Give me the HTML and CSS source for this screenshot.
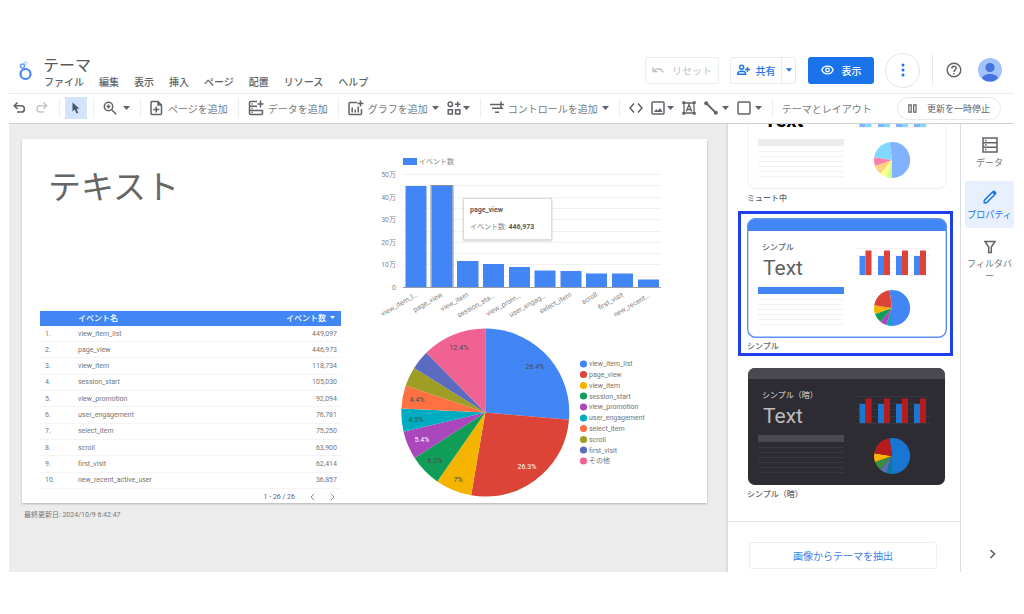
FILE: index.html
```html
<!DOCTYPE html>
<html lang="ja">
<head>
<meta charset="utf-8">
<title>テーマ</title>
<link rel="stylesheet" href="styles.css">
</head>
<body>
<svg class="defs" aria-hidden="true">
  <symbol id="caret" viewBox="0 0 7 4"><path d="M0 0h7L3.5 4z" fill="currentColor"/></symbol>
  <symbol id="preview" viewBox="0 0 200 121">
    <g class="t-grid">
      <path d="M109 30.500h74M109 37.500h74M109 43.500h74M109 50.500h74M109 57.500h74"/>
      <path d="M11 81.500h86M11 86.500h86M11 91.500h86M11 96.500h86M11 101.500h86M11 106.500h86"/>
    </g>
    <rect class="t-head" x="11" y="69" width="86" height="7"/>
    <path class="t-c1" d="M112.500 38h6v19h-6zM131 38h6v19h-6zM149 38h6v19h-6zM167 38h6v19h-6z"/>
    <path class="t-c2" d="M118.500 32.500h6V57h-6zM137 32.500h6V57h-6zM155 32.500h6V57h-6zM173 32.500h6V57h-6z"/>
    <path class="t-c1" d="M145 90L142.500 72.200A18 18 0 1 1 145 108z"/>
    <path class="t-c6" d="M145 90V108A18 18 0 0 1 139.400 107.100z"/>
    <path class="t-c5" d="M145 90L139.400 107.100A18 18 0 0 1 133.400 103.800z"/>
    <path class="t-c4" d="M145 90L133.400 103.800A18 18 0 0 1 128 96z"/>
    <path class="t-c3" d="M145 90L128 96A18 18 0 0 1 127.200 87.200z"/>
    <path class="t-c2" d="M145 90L127.200 87.200A18 18 0 0 1 142.500 72.200z"/>
  </symbol>
</svg>
<div class="app">
  <header class="header">
    <svg class="logo" viewBox="0 0 14 22" fill="none" stroke="#4285f4"><circle cx="7.500" cy="15" r="5" stroke-width="2.200"/><circle cx="4.500" cy="7" r="2" stroke-width="1.500" stroke="#669df6"/><circle cx="7.800" cy="4" r="1.500" stroke-width="1" stroke="#aecbfa"/></svg>
    <div class="titles">
      <h1>テーマ</h1>
      <nav class="menu"><button>ファイル</button><button>編集</button><button>表示</button><button>挿入</button><button>ページ</button><button>配置</button><button>リソース</button><button>ヘルプ</button></nav>
    </div>
    <div class="actions">
      <button class="btn reset" disabled><svg width="12" height="8" viewBox="0 0 12 8" fill="none" stroke="currentColor" stroke-width="1.300"><path d="M1 1v4.500h4.500M1.500 5C4 2 9 1.500 11.200 6.500"/></svg>リセット</button>
      <div class="split">
        <button class="share"><svg width="13" height="12" viewBox="0 0 13 12" fill="none" stroke="currentColor" stroke-width="1.400"><circle cx="4.700" cy="3.200" r="2"/><path d="M.8 10.300V9.500C.8 8 3 7.300 4.700 7.300S8.600 8 8.600 9.500v.8zM10.500 3v5M8 5.500h5"/></svg>共有</button>
        <button class="more" aria-label="共有メニュー"><svg class="caret"><use href="#caret"/></svg></button>
      </div>
      <button class="btn view"><svg width="13" height="10" viewBox="0 0 13 10" fill="none" stroke="currentColor" stroke-width="1.300"><path d="M.8 5C3-.1 10-.1 12.200 5 10 10.100 3 10.100.8 5z"/><circle cx="6.500" cy="5" r="1.800"/></svg>表示</button>
      <button class="round" aria-label="その他"><svg width="4" height="14" viewBox="0 0 4 14" fill="#1a73e8"><circle cx="2" cy="2" r="1.500"/><circle cx="2" cy="7" r="1.500"/><circle cx="2" cy="12" r="1.500"/></svg></button>
      <span class="rule"></span>
      <button class="plain help" aria-label="ヘルプ"><svg width="16" height="16" viewBox="0 0 16 16" fill="none" stroke="#5f6368" stroke-width="1.400"><circle cx="8" cy="8" r="6.800"/><path d="M5.800 6.500C5.800 3.500 10.300 3.600 10.300 6.300 10.300 7.900 8 7.900 8 9.900M8 10.900v1.500"/></svg></button>
      <button class="plain" aria-label="アカウント"><svg width="24" height="24" viewBox="0 0 24 24"><circle cx="12" cy="12" r="12" fill="#a1c2fa"/><circle cx="12" cy="9.500" r="4.600" fill="#4374e0"/><path d="M4 20.500C5 14.500 19 14.500 20 20.500A12 12 0 0 1 4 20.500z" fill="#4374e0"/></svg></button>
    </div>
  </header>

  <div class="toolbar">
    <div class="group first">
      <button aria-label="元に戻す"><svg width="14" height="14" viewBox="0 0 14 14" fill="none" stroke="#5f6368" stroke-width="1.600"><path d="M4.500 1.500L1.300 4.800 4.500 8M1.500 4.800H8.500C12.300 4.800 12.300 11 8.500 11H4"/></svg></button>
      <button aria-label="やり直し"><svg width="14" height="14" viewBox="0 0 14 14" fill="none" stroke="#c4c7ca" stroke-width="1.500"><path d="M8.500 1.500L11.700 4.800 8.500 8M11.500 4.800H5C1 4.800 1 11 5 11H9"/></svg></button>
    </div>
    <div class="group"><button class="cursor" aria-label="選択"><svg width="10" height="12" viewBox="0 0 10 12"><path d="M1.500.5v9l2.300-2 1.800 4 1.700-.8-1.800-3.900h3z" fill="#4a5568"/></svg></button></div>
    <div class="group"><button class="zoomer" aria-label="ズーム"><svg width="14" height="14" viewBox="0 0 14 14" fill="none" stroke="#5f6368" stroke-width="1.500"><circle cx="5.500" cy="5.500" r="4.200"/><path d="M8.700 8.700l4.500 4.500M3.500 5.500h4M5.500 3.500v4"/></svg><svg class="caret"><use href="#caret"/></svg></button></div>
    <div class="group"><button><svg width="14" height="16" viewBox="0 0 14 16" fill="none" stroke="#5f6368" stroke-width="1.500"><path d="M8 1.500H2Q1 1.500 1 2.500v11q0 1 1 1h8.500q1 0 1-1V5zM8 1.500V5h3.500M6.200 6.500v6M3.300 9.500h6"/></svg>ページを追加</button></div>
    <div class="group"><button><svg width="16" height="16" viewBox="0 0 16 16" fill="none" stroke="#5f6368" stroke-width="1.500"><path d="M9 1.500H2.500Q1.500 1.500 1.500 2.500v3q0 .8 1 .8H9M1.500 6.500v7q0 1 1 1h11q1 0 1-1v-3H1.500M12.500.5v7M9.500 4h6"/><path d="M3.500 4h1.200M3.500 8.500h1.200M3.500 12.500h1.200"/></svg>データを追加</button></div>
    <div class="group">
      <button><svg width="16" height="16" viewBox="0 0 16 16" fill="none" stroke="#5f6368" stroke-width="1.500"><path d="M9 2.500H2Q1 2.500 1 3.500v10q0 1 1 1h10.500q1 0 1-1V9M12.500.5v6M9.500 3.500h6M4.200 7.500v5M7.200 9.500v3M10.200 6.500v6"/></svg>グラフを追加<svg class="caret"><use href="#caret"/></svg></button>
      <button class="tight" aria-label="コミュニティ ビジュアライゼーション"><svg width="14" height="14" viewBox="0 0 14 14" fill="none" stroke="#5f6368" stroke-width="1.500"><circle cx="3.300" cy="3.300" r="2.200"/><path d="M1.200 8.700h4.200v4.200H1.200zM8.600 8.700h4.200v4.200H8.600zM10.700.5v5.600M7.900 3.300h5.600"/></svg><svg class="caret"><use href="#caret"/></svg></button>
    </div>
    <div class="group"><button><svg width="14" height="14" viewBox="0 0 14 14" fill="none" stroke="#5f6368" stroke-width="1.500"><path d="M0 3.500h8M2 7.200h11M5 11.200h4M11 .5v6M8 3.500h6"/></svg>コントロールを追加<svg class="caret"><use href="#caret"/></svg></button></div>
    <div class="group">
      <button aria-label="URLの埋め込み"><svg width="14" height="12" viewBox="0 0 14 12" fill="none" stroke="#5f6368" stroke-width="1.600"><path d="M5 1.500L1 6l4 4.500M9 1.500L13 6l-4 4.500"/></svg></button>
      <button class="tight" aria-label="画像"><svg width="14" height="14" viewBox="0 0 14 14" fill="none" stroke="#5f6368" stroke-width="1.500"><rect x="1" y="1" width="12" height="12" rx="1"/><path d="M3 11l2.200-3 1.600 1.800L9 7l2.500 4z" fill="#5f6368" stroke="none"/></svg><svg class="caret"><use href="#caret"/></svg></button>
      <button aria-label="テキスト"><svg width="14" height="14" viewBox="0 0 14 14" fill="none" stroke="#5f6368" stroke-width="1.300"><path d="M2 2h10v10H2zM4.300 10.500L7 3.500l2.700 7M5.200 8.500h3.600"/><path d="M.3.300h2.800v2.800H.3zM10.900.3h2.800v2.800h-2.800zM.3 10.900h2.800v2.800H.3zM10.900 10.900h2.800v2.800h-2.800z" fill="#5f6368" stroke="none"/></svg></button>
      <button aria-label="線"><svg width="14" height="14" viewBox="0 0 14 14"><path d="M2 2l10 10" stroke="#5f6368" stroke-width="1.800"/><circle cx="2.200" cy="2.200" r="2" fill="#5f6368"/><circle cx="11.800" cy="11.800" r="2" fill="#5f6368"/></svg><svg class="caret"><use href="#caret"/></svg></button>
      <button aria-label="図形"><svg width="14" height="14" viewBox="0 0 14 14" fill="none" stroke="#5f6368" stroke-width="1.500"><rect x="1" y="1" width="12" height="12" rx="1"/></svg><svg class="caret"><use href="#caret"/></svg></button>
    </div>
    <div class="group last"><button>テーマとレイアウト</button></div>
    <button class="pill"><svg width="9" height="9" viewBox="0 0 9 9" fill="none" stroke="#5f6368" stroke-width="1.200"><path d="M.8.800h2.400v7.400H.8zM5.600.800H8v7.400H5.600z"/></svg>更新を一時停止</button>
  </div>

  <div class="body">
    <main class="canvas">
      <section class="page">
        <div class="left">
          <h2>テキスト</h2>
          <table>
            <thead><tr><th></th><th>イベント名</th><th class="num">イベント数 <svg width="5" height="3" viewBox="0 0 5 3"><path d="M0 0h5L2.500 3z" fill="#fff"/></svg></th></tr></thead>
            <tbody>
              <tr><td>1.</td><td>view_item_list</td><td class="num">449,097</td></tr>
              <tr><td>2.</td><td>page_view</td><td class="num">446,973</td></tr>
              <tr><td>3.</td><td>view_item</td><td class="num">118,734</td></tr>
              <tr><td>4.</td><td>session_start</td><td class="num">105,030</td></tr>
              <tr><td>5.</td><td>view_promotion</td><td class="num">92,094</td></tr>
              <tr><td>6.</td><td>user_engagement</td><td class="num">76,781</td></tr>
              <tr><td>7.</td><td>select_item</td><td class="num">75,250</td></tr>
              <tr><td>8.</td><td>scroll</td><td class="num">63,900</td></tr>
              <tr><td>9.</td><td>first_visit</td><td class="num">62,414</td></tr>
              <tr><td>10.</td><td>new_recent_active_user</td><td class="num">36,857</td></tr>
            </tbody>
          </table>
          <div class="pager"><span>1 - 26 / 26</span>
            <button aria-label="前へ"><svg width="5" height="8" viewBox="0 0 5 8" fill="none" stroke="#8a8d91"><path d="M4.200.8L1 4l3.200 3.200"/></svg></button>
            <button aria-label="次へ"><svg width="5" height="8" viewBox="0 0 5 8" fill="none" stroke="#8a8d91"><path d="M.8.8L4 4 .8 7.200"/></svg></button>
          </div>
        </div>
        <svg class="charts" viewBox="341 139 366 364">
          <rect x="403" y="158" width="14" height="7" fill="#4285f4"/>
          <text x="419" y="164">イベント数</text>
          <path class="grid" d="M403 174.500h258M403 197.500h258M403 219.500h258M403 242.500h258M403 264.500h258M403 185.500h258M403 208.500h258M403 231.500h258M403 253.500h258M403 276.500h258"/>
          <g class="end"><text x="396" y="177">50万</text><text x="396" y="200">40万</text><text x="396" y="222">30万</text><text x="396" y="245">20万</text><text x="396" y="267">10万</text><text x="396" y="290">0</text></g>
          <path fill="#4285f4" d="M405.500 186h21v102h-21zM431.500 186h21v102h-21zM457 261h21.500v27H457zM483 264h21v24h-21zM509 267h21v21h-21zM534.500 270.500h21V288h-21zM560.500 271h21v17h-21zM586 273.500h21V288h-21zM612 273.500h21V288h-21zM638 279.500h21V288h-21z"/>
          <rect x="431" y="185.500" width="22" height="102" fill="none" stroke="#8a8f98"/>
          <path d="M403 287.500h258" stroke="#9a9da1"/>
          <g class="end">
            <text transform="translate(418 296) rotate(-30)">view_item_l…</text>
            <text transform="translate(443 296) rotate(-30)">page_view</text>
            <text transform="translate(469 296) rotate(-30)">view_item</text>
            <text transform="translate(495 297) rotate(-30)">session_sta…</text>
            <text transform="translate(521 297) rotate(-30)">view_prom…</text>
            <text transform="translate(546 297) rotate(-30)">user_engag…</text>
            <text transform="translate(572 296) rotate(-30)">select_item</text>
            <text transform="translate(598 296) rotate(-30)">scroll</text>
            <text transform="translate(624 296) rotate(-30)">first_visit</text>
            <text transform="translate(650 297) rotate(-30)">new_recent…</text>
          </g>
          <g class="tip"><rect x="463.500" y="198.500" width="88" height="41" fill="#fff" stroke="#dadce0"/><text class="dark" x="470" y="212">page_view</text><text x="470" y="229">イベント数: <tspan class="dark">446,973</tspan></text></g>

          <g class="pie" transform="translate(485.300 412.500) rotate(-90)">
            <circle r="42" pathLength="100" stroke="#4285f4" stroke-dasharray="26.400 73.600"/>
            <circle r="42" pathLength="100" stroke="#db4437" stroke-dasharray="26.300 73.700" stroke-dashoffset="-26.400"/>
            <circle r="42" pathLength="100" stroke="#f4b400" stroke-dasharray="7 93" stroke-dashoffset="-52.700"/>
            <circle r="42" pathLength="100" stroke="#0f9d58" stroke-dasharray="6.200 93.800" stroke-dashoffset="-59.700"/>
            <circle r="42" pathLength="100" stroke="#ab47bc" stroke-dasharray="5.400 94.600" stroke-dashoffset="-65.900"/>
            <circle r="42" pathLength="100" stroke="#00acc1" stroke-dasharray="4.500 95.500" stroke-dashoffset="-71.300"/>
            <circle r="42" pathLength="100" stroke="#ff7043" stroke-dasharray="4.400 95.600" stroke-dashoffset="-75.800"/>
            <circle r="42" pathLength="100" stroke="#9e9d24" stroke-dasharray="3.700 96.300" stroke-dashoffset="-80.200"/>
            <circle r="42" pathLength="100" stroke="#5c6bc0" stroke-dasharray="3.700 96.300" stroke-dashoffset="-83.900"/>
            <circle r="42" pathLength="100" stroke="#f06292" stroke-dasharray="12.400 87.600" stroke-dashoffset="-87.600"/>
          </g>
          <g class="share-labels"><text x="535" y="369">26.4%</text><text class="light" x="527" y="469">26.3%</text><text x="458" y="482">7%</text><text x="435" y="463">6.2%</text><text class="light" x="422" y="442">5.4%</text><text x="416" y="422">4.5%</text><text x="417" y="402">4.4%</text><text x="459" y="350">12.4%</text></g>
          <g>
            <circle cx="583.500" cy="364" r="3.600" fill="#4285f4"/><circle cx="583.500" cy="374.500" r="3.600" fill="#db4437"/><circle cx="583.500" cy="385.500" r="3.600" fill="#f4b400"/><circle cx="583.500" cy="396" r="3.600" fill="#0f9d58"/><circle cx="583.500" cy="407" r="3.600" fill="#ab47bc"/><circle cx="583.500" cy="418" r="3.600" fill="#00acc1"/><circle cx="583.500" cy="428.500" r="3.600" fill="#ff7043"/><circle cx="583.500" cy="439.500" r="3.600" fill="#9e9d24"/><circle cx="583.500" cy="450" r="3.600" fill="#5c6bc0"/><circle cx="583.500" cy="461" r="3.600" fill="#f06292"/>
          </g>
          <g class="legend"><text x="589" y="366">view_item_list</text><text x="589" y="377">page_view</text><text x="589" y="388">view_item</text><text x="589" y="399">session_start</text><text x="589" y="409">view_promotion</text><text x="589" y="420">user_engagement</text><text x="589" y="431">select_item</text><text x="589" y="442">scroll</text><text x="589" y="453">first_visit</text><text x="589" y="463">その他</text></g>
        </svg>
      </section>
      <p class="updated">最終更新日: 2024/10/9 6:42:47</p>
    </main>

    <aside class="panel">
      <div class="themes">
        <button class="theme muted">
          <svg viewBox="0 0 200 121"><rect x="1" y="1.500" width="198" height="117" rx="8" fill="#fff" stroke="#eceff1"/><text class="big" x="17" y="57">Text</text><use href="#preview"/></svg>
          <span>ミュート中</span>
        </button>
        <button class="theme simple selected" aria-pressed="true">
          <svg viewBox="0 0 200 121"><path d="M0 13V9A9 9 0 0 1 9 0H191A9 9 0 0 1 200 9V13z" fill="#4285f4"/><rect x=".7" y=".7" width="198.600" height="118.600" rx="8" fill="none" stroke="#5b93f5" stroke-width="1.400"/><text class="name" x="15" y="32">シンプル</text><text class="big" x="16" y="57">Text</text><use href="#preview"/></svg>
          <span>シンプル</span>
        </button>
        <button class="theme night">
          <svg viewBox="0 0 200 121"><rect x="1" y="2" width="197" height="117" rx="7" fill="#2d2c33"/><path d="M1 13V9A7 7 0 0 1 8 2H191A7 7 0 0 1 198 9V13z" fill="#4a4950"/><text class="name" x="15" y="32">シンプル（暗）</text><text class="big" x="16" y="57">Text</text><use href="#preview"/></svg>
          <span>シンプル（暗）</span>
        </button>
      </div>
      <div class="extract"><button>画像からテーマを抽出</button></div>
    </aside>

    <nav class="rail">
      <button><svg width="16" height="16" viewBox="0 0 16 16" fill="none" stroke="#5f6368" stroke-width="1.500"><path d="M1 1h14v14H1zM1 5.700h14M1 10.300h14"/><path d="M3 3.400h1.500M3 8h1.500M3 12.600h1.500"/></svg>データ</button>
      <button class="on"><svg width="16" height="16" viewBox="0 0 16 16" fill="none" stroke="#1a73e8" stroke-width="1.400"><path d="M2.200 13.800v-2.400L10.500 3.100l2.400 2.400L4.600 13.800z"/><path d="M10 3.100l1.300-1.300q.8-.6 1.500 0l1.400 1.400q.6.700 0 1.500L12.900 6z" fill="#1a73e8" stroke="none"/></svg>プロパティ</button>
      <button class="filter"><svg width="14" height="14" viewBox="0 0 14 14" fill="none" stroke="#5f6368" stroke-width="1.500"><path d="M2 1.500h10L8.300 7v5.500H5.700V7z"/></svg>フィルタバー</button>
      <button class="collapse" aria-label="折りたたむ"><svg width="7" height="10" viewBox="0 0 7 10" fill="none" stroke="#5f6368" stroke-width="1.700"><path d="M1.500 1l4 4-4 4"/></svg></button>
    </nav>
  </div>
</div>
</body>
</html>
```

FILE: styles.css
```css
* { box-sizing: border-box; }

body {
  margin: 0;
  height: 100vh;
  min-height: 560px;
  padding: 43px 10px 42px 9px;
  background: #fff;
  color: #5f6368;
  font-family: Roboto, "Noto Sans CJK JP", sans-serif;
  font-size: 10px;
}

button {
  margin: 0;
  padding: 0;
  border: 0;
  background: none;
  color: inherit;
  font: inherit;
  display: flex;
  align-items: center;
  justify-content: center;
  white-space: nowrap;
}

svg { display: block; flex: none; }
.defs { position: absolute; width: 0; height: 0; }
.caret { width: 7px; height: 4px; }

.app { display: flex; flex-direction: column; height: 100%; }

/* Header */
.header {
  display: flex;
  align-items: center;
  height: 51px;
  padding: 4px 12px 0 9px;
  border-bottom: 1px solid #e8eaed;
}
.logo { width: 14px; height: 22px; }
.titles { padding: 7px 0 0 11px; }
.titles h1 { margin: 0; font-size: 16px; line-height: 18px; font-weight: 400; color: #55585c; }
.menu { display: flex; gap: 15px; padding-left: 1px; line-height: 15px; font-weight: 500; color: #5f6368; }
.actions { display: flex; align-items: center; margin-left: auto; }

.btn, .split { height: 27px; border-radius: 3px; }
.btn { gap: 8px; font-size: 10px; }
.reset { width: 74px; margin-right: 11px; border: 1px solid #eceef0; color: #bdc1c6; }
.split { display: flex; width: 66px; margin-right: 12px; border: 1px solid #e8eaed; color: #1a73e8; font-weight: 500; }
.share { flex: 1; gap: 6px; border-right: 1px solid #e8eaed; }
.more { width: 13px; }
.more .caret { width: 6px; }
.view { width: 66px; margin-right: 11px; background: #1a73e8; color: #fff; font-weight: 500; }
.round { width: 35px; height: 35px; margin-right: 12px; border: 1px solid #e0e2e5; border-radius: 50%; }
.rule { width: 1px; height: 32px; margin-right: 13px; background: #e8eaed; }
.help { margin-right: 16px; }

/* Toolbar */
.toolbar {
  display: flex;
  align-items: center;
  height: 30px;
  padding: 0 13px 1px 0;
  border-bottom: 1px solid #cfd1d4;
  color: #777b80;
}
.group {
  display: flex;
  align-items: center;
  height: 20px;
  padding: 0 6px 0 5px;
  border-right: 1px solid #eceef0;
}
.group.first { padding-left: 0; }
.group.last { border: 0; padding-right: 0; }
.group button { gap: 4px; padding: 0 4px; }
.group .cursor { width: 22px; height: 22px; padding: 0; background: #d2e3fc; }
.group .zoomer { gap: 6px; }
.group .tight { gap: 2px; }
.toolbar .caret { color: #5f6368; }
.pill {
  gap: 10px;
  width: 104px;
  height: 23px;
  margin-left: auto;
  border: 1px solid #e4e6e9;
  border-radius: 12px;
  font-size: 9px;
  color: #5f6368;
}

/* Work area */
.body { display: flex; flex: 1; min-height: 0; }
.canvas { flex: 1; min-width: 0; padding: 15px 19px 0 13px; background: #ececec; overflow: hidden; }
.page {
  display: grid;
  grid-template-columns: 319fr 366fr;
  background: #fff;
  box-shadow: 0 1px 2px rgba(0, 0, 0, .25);
}
.left { display: flex; flex-direction: column; padding-left: 18px; }
.left h2 {
  margin: 0;
  padding: 25px 0 0 8px;
  font-size: 33px;
  line-height: 48px;
  font-weight: 400;
  color: #666;
}
.left table {
  width: 100%;
  height: 178px;
  margin-top: auto;
  border-collapse: collapse;
  table-layout: fixed;
  font-size: 7px;
  line-height: 10px;
  color: #757575;
}
.left th, .left td { padding: 0 4px 0 5px; text-align: left; }
.left th { height: 15px; background: #4285f4; color: #fff; font-size: 8px; font-weight: 500; }
.left th:first-child { width: 33px; }
.left th svg { display: inline-block; margin: 0 2px 2px 2px; }
.left td { border-bottom: 1px solid #f4f4f4; }
.left .num { text-align: right; }
.pager { display: flex; align-items: center; justify-content: flex-end; gap: 15px; height: 14px; padding: 2px 6px 0 0; font-size: 7px; }

.charts { width: 100%; font-size: 7px; fill: #858585; }
.charts .end { text-anchor: end; }
.charts .dark { fill: #5a5a5a; font-weight: 700; }
.charts .grid { stroke: #f1f1f1; }
.tip rect { filter: drop-shadow(0 1px 1px rgba(0, 0, 0, .2)); }
.pie circle { fill: none; stroke-width: 84px; }
.share-labels { text-anchor: middle; fill: #4a4a4a; }
.share-labels .light { fill: #fff; }
.legend { fill: #757575; }
.updated { margin: 6px 0 0 2px; font-size: 7px; line-height: 12px; color: #777; }

/* Theme panel */
.panel {
  display: flex;
  flex-direction: column;
  width: 235px;
  border: solid #dadce0;
  border-width: 0 1px 0 2px;
}
.themes {
  display: flex;
  flex: 1;
  flex-direction: column;
  justify-content: flex-end;
  gap: 3px;
  min-height: 0;
  padding: 0 7px 17px 10px;
  overflow: hidden;
}
.theme {
  flex: none;
  flex-direction: column;
  align-items: stretch;
  padding: 4px 3px 0 6px;
  border: 3px solid transparent;
  text-align: left;
  font-size: 8px;
  line-height: 12px;
  font-weight: 500;
}
.theme svg { width: 100%; margin-bottom: 2px; }
.selected { border-color: #1f3fee; }
.name { font-size: 8px; font-weight: 500; fill: #5f6368; }
.big { font-size: 21px; font-weight: 400; fill: #616161; }
.muted .big { font-size: 20px; font-weight: 700; fill: #000; }
.night .name, .night .big { fill: #bdbdbd; }

.t-grid { stroke: var(--grid); }
.t-head { fill: var(--head); }
.t-c1 { fill: var(--c1); }
.t-c2 { fill: var(--c2); }
.t-c3 { fill: var(--c3); }
.t-c4 { fill: var(--c4); }
.t-c5 { fill: var(--c5); }
.t-c6 { fill: var(--c6); }
.muted { --grid: #f3f3f3; --head: #ececec; --c1: #82b1ff; --c2: #80d8ff; --c3: #ff80ab; --c4: #ffd180; --c5: #ffff8d; --c6: #ccff90; }
.simple { --grid: #f3f3f3; --head: #4285f4; --c1: #4285f4; --c2: #db4437; --c3: #f4b400; --c4: #0f9d58; --c5: #ab47bc; --c6: #00acc1; }
.night { --grid: #38373e; --head: #4a4950; --c1: #1976d2; --c2: #b71c1c; --c3: #ffb300; --c4: #388e3c; --c5: #5c6bc0; --c6: #00838f; }

.extract { padding: 20px 23px 3px 21px; border-top: 1px solid #e0e2e5; }
.extract button { width: 100%; height: 27px; border: 1px solid #eceef0; border-radius: 3px; color: #3b82ea; }

/* Right rail */
.rail { display: flex; flex-direction: column; gap: 5px; width: 53px; padding: 5px 0 12px 4px; font-size: 9px; line-height: 12px; color: #70757a; }
.rail button { flex-direction: column; gap: 4px; min-height: 47px; white-space: normal; word-break: break-all; border-radius: 3px; }
.rail .on { background: #e8f0fe; color: #1a73e8; }
.rail .filter { padding-top: 7px; }
.rail .collapse { min-height: 12px; margin: auto 0 0 6px; }
```
